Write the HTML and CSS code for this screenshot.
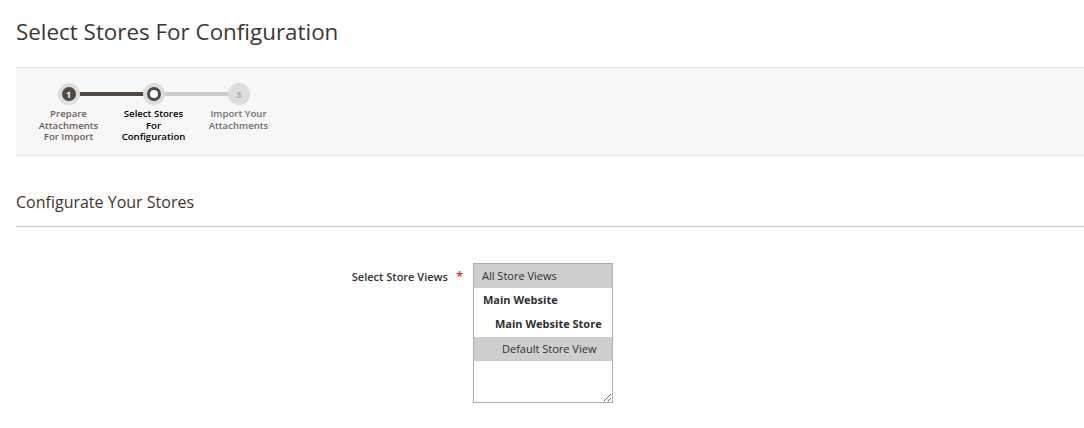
FILE: index.html
```html
<!DOCTYPE html>
<html>

<head>
    <meta charset="UTF-8">
    <title>Select Stores For Configuration</title>
    <link rel="stylesheet" href="styles.css">
</head>

<body>
    <h1 class="page-title">Select Stores For Configuration</h1>

    <!-- wizard steps -->
    <div class="steps-panel">
        <ul class="steps">
            <li class="step step-done">
                <span class="step-dot"><span class="step-num">1</span></span>
                <span class="step-label">Prepare Attachments For Import</span>
            </li>
            <li class="step step-active">
                <span class="step-dot"></span>
                <span class="step-label">Select Stores For Configuration</span>
            </li>
            <li class="step step-todo">
                <span class="step-dot"><span class="step-num">3</span></span>
                <span class="step-label">Import Your Attachments</span>
            </li>
        </ul>
    </div>

    <h2 class="section-title">Configurate Your Stores</h2>

    <div class="field">
        <label class="field-label">Select Store Views</label>
        <div class="store-list">
            <div class="store-option selected">All Store Views</div>
            <div class="store-option group">Main Website</div>
            <div class="store-option group sub">Main Website Store</div>
            <div class="store-option view selected">Default Store View</div>
        </div>
    </div>
</body>

</html>
```

FILE: styles.css
```css
body {
    margin: 0;
    padding: 0 0 0 16px;
    background-color: #FFFFFF;
    font-family: "Open Sans", sans-serif;
    color: #41362F;
}

.page-title {
    margin: 0;
    height: 67px;
    line-height: 63px;
    font-size: 22.4px;
    font-weight: 400;
    color: #41362F;
}

.steps-panel {
    background-color: #F7F7F7;
    border-top: 1px solid #E3E3E3;
    border-bottom: 1px solid #E3E3E3;
    height: 87px;
}

.steps {
    list-style: none;
    margin: 0;
    padding: 15px 0 0 10px;
    display: flex;
}

.step {
    width: 85px;
    display: flex;
    flex-direction: column;
    align-items: center;
    position: relative;
}

/* connector line to the next step */
.step::after {
    content: "";
    position: absolute;
    top: 9px;
    left: 50%;
    width: 85px;
    height: 4px;
    background-color: #CCCCCC;
    z-index: 0;
}

.step-done::after {
    background-color: #514943;
}

.step:last-child::after {
    display: none;
}

.step-dot {
    position: relative;
    z-index: 1;
    box-sizing: border-box;
    width: 22px;
    height: 22px;
    border-radius: 50%;
    display: flex;
    align-items: center;
    justify-content: center;
    background-color: #DDDDDD;
}

.step-done .step-dot::before,
.step-active .step-dot::before {
    content: "";
    position: absolute;
    left: 4px;
    top: 4px;
    width: 14px;
    height: 14px;
    border-radius: 50%;
    background-color: #514943;
}

.step-active .step-dot::before {
    box-sizing: border-box;
    border: 3px solid #514943;
    background-color: #FFFFFF;
}

.step-num {
    position: relative;
    font-size: 9px;
    font-weight: 700;
    color: #AAAAAA;
}

.step-done .step-num {
    color: #FFFFFF;
}

.step-label {
    margin-top: 3px;
    max-width: 68px;
    font-size: 9.6px;
    line-height: 11.7px;
    font-weight: 600;
    text-align: center;
    color: #6B5F57;
}

.step-active .step-label {
    color: #000000;
}

.step-todo .step-label {
    color: #6E6E6E;
}

.section-title {
    margin: 0;
    padding-top: 33px;
    height: 37px;
    line-height: 26px;
    font-size: 16px;
    font-weight: 400;
    color: #41362F;
    border-bottom: 1px solid #CCCCCC;
}

.field {
    display: flex;
    align-items: flex-start;
    margin-top: 36px;
}

.field-label {
    width: 447px;
    padding-top: 4px;
    text-align: right;
    font-size: 11px;
    font-weight: 600;
    color: #303030;
}

.field-label::after {
    content: "*";
    color: #E22626;
    margin-left: 8px;
    font-size: 13px;
}

.store-list {
    margin-left: 10px;
    box-sizing: border-box;
    width: 140px;
    height: 140px;
    border: 1px solid #ADADAD;
    overflow: hidden;
    resize: both;
    font-size: 11px;
    color: #303030;
}

.store-option {
    height: 24.5px;
    line-height: 24px;
    padding-left: 8px;
    white-space: nowrap;
}

.store-option.selected {
    background-color: #CECECE;
}

.store-option:first-child {
    height: 23.5px;
    line-height: 23px;
}

.store-option.group {
    font-weight: 700;
    padding-left: 9px;
}

.store-option.sub {
    padding-left: 21px;
}

.store-option.view {
    padding-left: 28px;
}
```
